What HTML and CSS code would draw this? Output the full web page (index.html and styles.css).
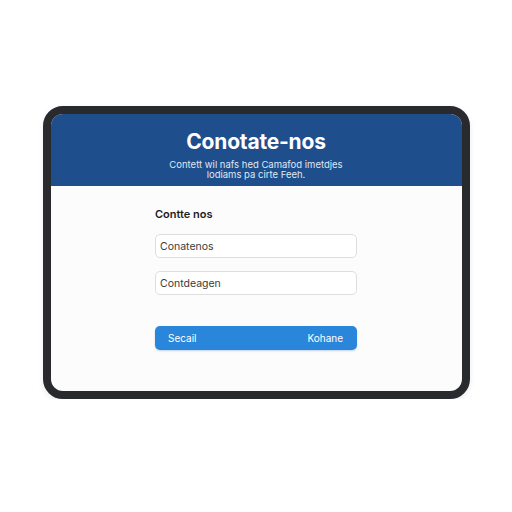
FILE: index.html
```html
<!DOCTYPE html>
<html lang="pt">
<head>
  <meta charset="UTF-8" />
  <meta name="viewport" content="width=device-width, initial-scale=1.0"/>
  <title>Conotate-nos</title>
  <link rel="stylesheet" href="styles.css">
</head>
<body>

<!-- Moldura do tablet -->
<div class="device">
  <div class="screen">

    <header class="top">
      <h1>Conotate-nos</h1>
      <p>Contett wil nafs hed Camafod imetdjes<br>lodiams pa cirte Feeh.</p>
    </header>

    <form class="form">
      <label class="form-label">Contte nos</label>
      <input class="field" type="text" value="Conatenos">
      <input class="field" type="text" value="Contdeagen">
      <button class="btn" type="button">
        <span>Secail</span>
        <span>Kohane</span>
      </button>
    </form>

  </div>
</div>

</body>
</html>
```

FILE: styles.css
```css
/* Reset */
* {
  margin: 0;
  padding: 0;
  box-sizing: border-box;
}

body {
  background: #ffffff;
  font-family: 'Inter', 'Liberation Sans', sans-serif;
  color: #222;
  display: flex;
  justify-content: center;
  padding-top: 106px;
}

/* Moldura */
.device {
  width: 427px;
  height: 293px;
  border: 8px solid #282a2e;
  border-radius: 20px;
  background: #282a2e;
  box-shadow: 0 2px 6px rgba(0, 0, 0, 0.08);
}

.screen {
  height: 100%;
  background: #fcfcfd;
  border-radius: 12px;
  overflow: hidden;
  display: flex;
  flex-direction: column;
}

/* Cabeçalho azul */
.top {
  height: 72px;
  background: #1f4e8c;
  color: #fff;
  text-align: center;
  padding-top: 16px;
}

.top h1 {
  font-size: 21px;
  font-weight: 700;
  line-height: 24px;
  letter-spacing: -0.2px;
}

.top p {
  margin-top: 6px;
  font-size: 9.5px;
  line-height: 10px;
  color: #dfe8f5;
}

/* Formulário */
.form {
  width: 202px;
  margin: 0 auto;
  padding-top: 21px;
  display: flex;
  flex-direction: column;
}

.form-label {
  font-size: 11px;
  font-weight: 600;
  color: #1c1c1c;
  line-height: 14px;
  margin-bottom: 13px;
}

.field {
  height: 24px;
  border: 1px solid #dcdee2;
  border-radius: 5px;
  background: #fff;
  padding: 0 4px;
  font-family: inherit;
  font-size: 10.5px;
  color: #3a3a3a;
  margin-bottom: 13px;
}

.btn {
  margin-top: 18px;
  height: 24px;
  border: none;
  border-radius: 5px;
  background: #2a86db;
  color: #fff;
  font-family: inherit;
  font-size: 10px;
  font-weight: 400;
  display: flex;
  justify-content: space-between;
  align-items: center;
  padding: 0 14px 0 13px;
  box-shadow: 0 1px 2px rgba(30, 90, 160, 0.25);
}
```
